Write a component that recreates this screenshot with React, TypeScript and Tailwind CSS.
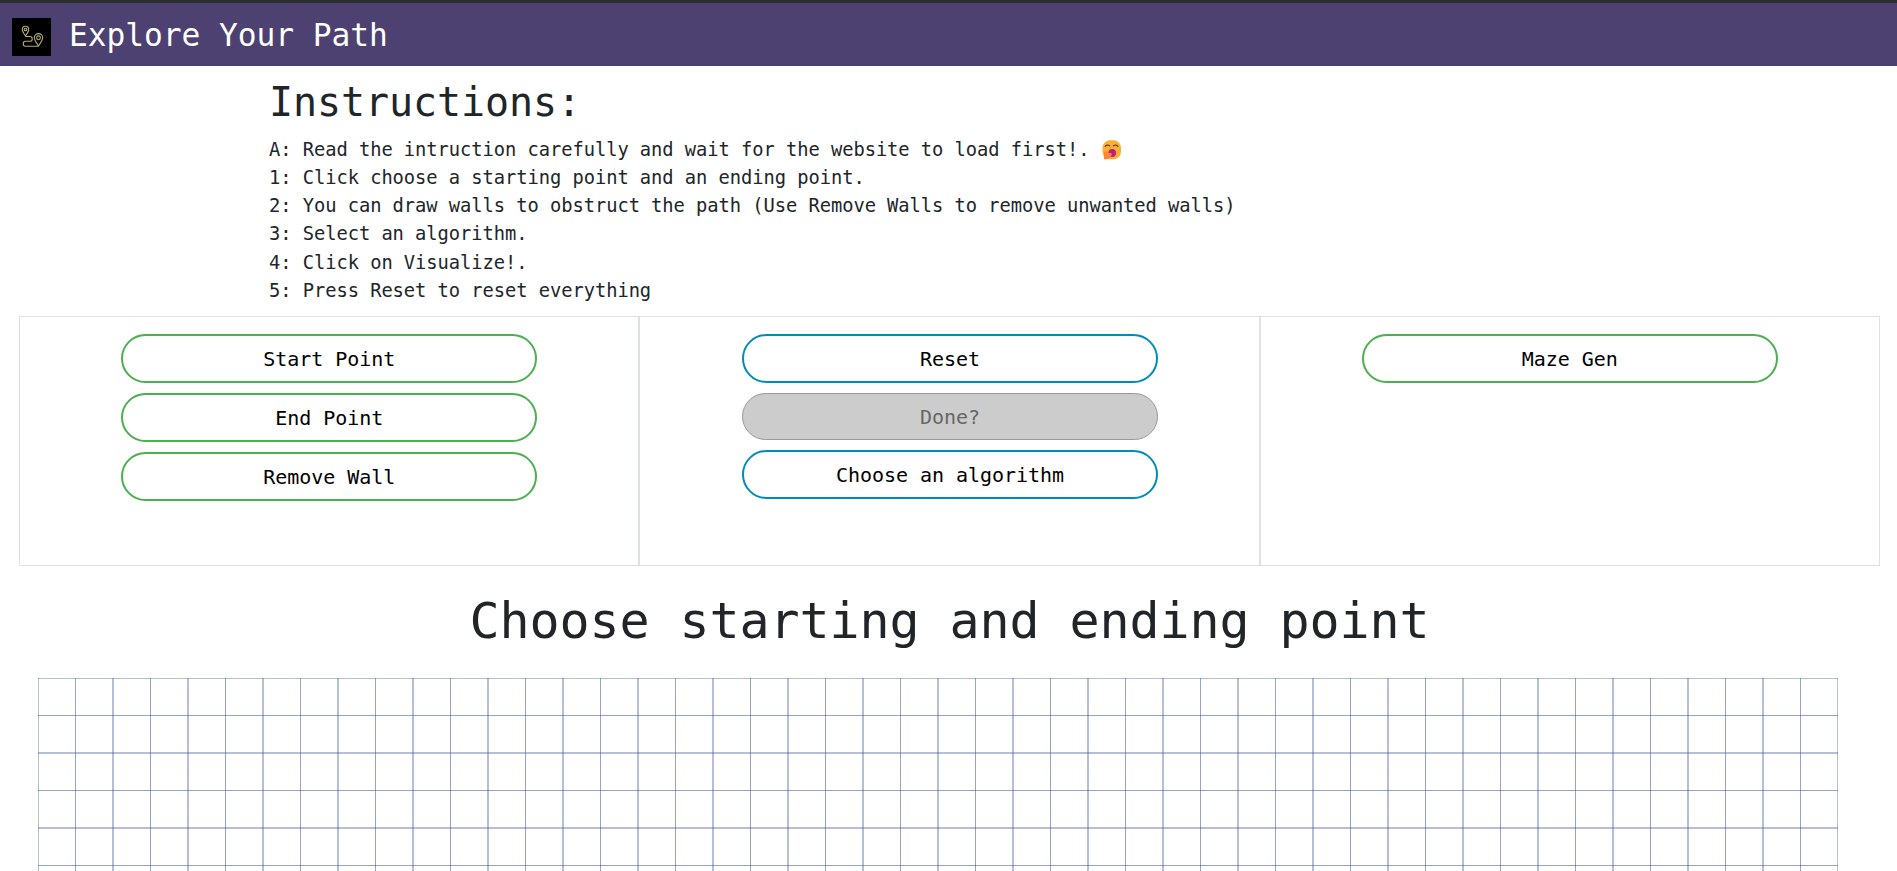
import React from "react";

const steps = [
  "1: Click choose a starting point and an ending point.",
  "2: You can draw walls to obstruct the path (Use Remove Walls to remove unwanted walls)",
  "3: Select an algorithm.",
  "4: Click on Visualize!.",
  "5: Press Reset to reset everything",
];

const CELL = 37.5;
const COLS = 48;
const ROWS = 16;

const tones = {
  green: "h-[49px] border-2 border-[#4caf50] bg-white text-black",
  blue: "h-[49px] border-2 border-[#008cba] bg-white text-black",
  disabled: "h-[47px] border border-[#999999] bg-[#cccccc] text-[#666666]",
};

function Pill({ tone, children }: { tone: keyof typeof tones; children: React.ReactNode }) {
  return (
    <button
      disabled={tone === "disabled"}
      className={`flex w-[416px] shrink-0 items-center justify-center rounded-[25px] text-[20px] tracking-[-0.04px] ${tones[tone]}`}
    >
      {children}
    </button>
  );
}

function Logo() {
  return (
    <svg viewBox="0 0 39 38" className="h-[38px] w-[39px] shrink-0" fill="none" stroke="#b5ad72" strokeWidth="1.1">
      <rect width="39" height="38" fill="#000" stroke="none" />
      <path d="M13.5 18c-1.500-2.500-3.200-4.300-3.200-6.500a3.200 3.200 0 0 1 6.400 0c0 2.200-1.700 4-3.200 6.500z" />
      <circle cx="13.500" cy="11.500" r="1.300" />
      <path d="M26.500 28c-2-3.500-4.200-5.500-4.200-8.200a4.200 4.200 0 0 1 8.400 0c0 2.700-2.200 4.700-4.200 8.200z" />
      <circle cx="26.500" cy="19.800" r="1.900" />
      <path d="M13.500 18.500H18c3 0 3 4.800 0 4.800h-4.500c-3 0-3 5 0 5h13" />
    </svg>
  );
}

function YawnFace() {
  return (
    <svg viewBox="0 0 20 20" className="ml-[13px] h-5 w-5">
      <rect x="0.500" y="0.300" width="18.500" height="19" rx="7.500" fill="#fdb02f" />
      <path d="M3.300 6.300c1-1.500 3-1.700 4.400-.5M11.500 5.800c1.400-1.200 3.400-1 4.400.5" fill="none" stroke="#5b3a34" strokeWidth="1.200" strokeLinecap="round" />
      <ellipse cx="10.200" cy="13" rx="3.800" ry="4" fill="#bb1d80" />
      <path d="M2 19.300V13c0-2 2.500-2.300 3.500-1l2 1.300c1.500-1 3 .3 2 2l-2.500 3c-1.300 1-3.500 1.300-5 1z" fill="#ff8435" />
    </svg>
  );
}

// Lines on whole pixels spread over two pixels; lines on half pixels fill one and look darker.
const lineStyle = (i: number) => ({
  strokeWidth: i % 2 === 0 ? 2 : 1,
  strokeOpacity: i % 2 === 0 ? 0.38 : 0.55,
});

function Board() {
  return (
    <svg width={COLS * CELL} height={ROWS * CELL} className="ml-[38px] mt-[28px] block shrink-0" stroke="#40579b">
      {Array.from({ length: COLS + 1 }, (_, i) => (
        <line key={`v${i}`} x1={i * CELL} x2={i * CELL} y1={0} y2={ROWS * CELL} {...lineStyle(i)} />
      ))}
      {Array.from({ length: ROWS + 1 }, (_, i) => (
        <line key={`h${i}`} x1={0} x2={COLS * CELL} y1={i * CELL} y2={i * CELL} {...lineStyle(i)} />
      ))}
    </svg>
  );
}

export default function App() {
  return (
    <div className="flex h-screen flex-col overflow-hidden bg-white font-['DejaVu_Sans_Mono',monospace] text-[#212529]">
      <header className="flex h-[66px] shrink-0 items-center gap-[18px] border-t-[3px] border-[#2e2e2e] bg-[#4d4172] pl-3 pt-[5px]">
        <Logo />
        <span className="pb-[3px] text-[31.25px] leading-none tracking-[-0.06px] text-white">Explore Your Path</span>
      </header>

      <section className="h-[250px] shrink-0 pl-[269px] pt-[12px]">
        <h1 className="mb-[10px] text-[40px] leading-[48px] tracking-[-0.08px]">Instructions:</h1>
        <div className="text-[18.75px] leading-[28.125px] tracking-[-0.05px]">
          <p className="flex items-center">
            A: Read the intruction carefully and wait for the website to load first!.
            <YawnFace />
          </p>
          {steps.map((s) => (
            <p key={s}>{s}</p>
          ))}
        </div>
      </section>

      <section className="ml-[19px] grid h-[250px] w-[1861px] shrink-0 grid-cols-3">
        <div className="flex flex-col items-center gap-[10px] border border-[#dee2e6] pt-[17px]">
          <Pill tone="green">Start Point</Pill>
          <Pill tone="green">End Point</Pill>
          <Pill tone="green">Remove Wall</Pill>
        </div>
        <div className="flex flex-col items-center gap-[10px] border border-[#dee2e6] pl-px pt-[17px]">
          <Pill tone="blue">Reset</Pill>
          <Pill tone="disabled">Done?</Pill>
          <Pill tone="blue">Choose an algorithm</Pill>
        </div>
        <div className="flex flex-col items-center gap-[10px] border border-[#dee2e6] pt-[17px]">
          <Pill tone="green">Maze Gen</Pill>
        </div>
      </section>

      <h2 className="mt-[27px] shrink-0 pl-[2px] text-center text-[50px] leading-[57px] tracking-[-0.1px]">
        Choose starting and ending point
      </h2>
      <Board />
    </div>
  );
}
